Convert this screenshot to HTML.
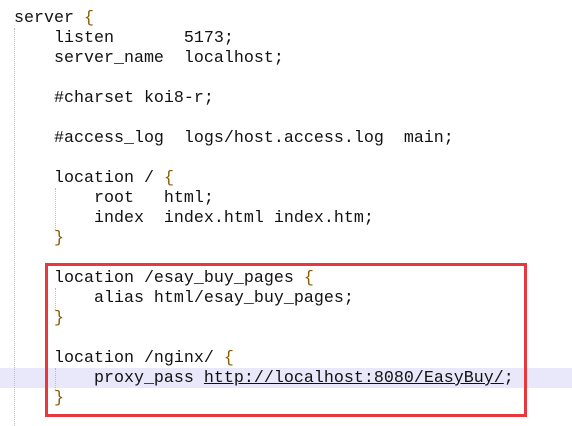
<!DOCTYPE html>
<html><head><style>
body{margin:0;width:572px;height:426px;background:#fff;position:relative;overflow:hidden;font-family:"Liberation Mono","Courier New",monospace;font-size:16.67px;color:#111}
.l{position:absolute;left:14px;height:20px;line-height:20px;white-space:pre}
.b{color:#8a5a00}
.g{position:absolute;border-left:1px dotted #bbb;width:0}
u{text-decoration:underline}
</style></head><body>
<div style="position:absolute;left:0;top:368px;width:572px;height:20px;background:#e8e8fa"></div>
<div class="g" style="left:14px;top:28px;height:398px"></div>
<div class="g" style="left:55px;top:188px;height:42px"></div>
<div class="g" style="left:55px;top:288px;height:22px"></div>
<div class="g" style="left:55px;top:368px;height:22px"></div>
<div class="l" style="top:9px">server <span class="b">{</span></div>
<div class="l" style="top:29px">    listen       5173;</div>
<div class="l" style="top:49px">    server_name  localhost;</div>
<div class="l" style="top:89px">    #charset koi8-r;</div>
<div class="l" style="top:129px">    #access_log  logs/host.access.log  main;</div>
<div class="l" style="top:169px">    location / <span class="b">{</span></div>
<div class="l" style="top:189px">        root   html;</div>
<div class="l" style="top:209px">        index  index.html index.htm;</div>
<div class="l" style="top:229px">    <span class="b">}</span></div>
<div class="l" style="top:269px">    location /esay_buy_pages <span class="b">{</span></div>
<div class="l" style="top:289px">        alias html/esay_buy_pages;</div>
<div class="l" style="top:309px">    <span class="b">}</span></div>
<div class="l" style="top:349px">    location /nginx/ <span class="b">{</span></div>
<div class="l" style="top:369px">        proxy_pass <u>http://localhost:8080/EasyBuy/</u>;</div>
<div class="l" style="top:389px">    <span class="b">}</span></div>
<div style="position:absolute;left:45px;top:263px;width:476px;height:148px;border:3px solid #e8383d"></div>
</body></html>
